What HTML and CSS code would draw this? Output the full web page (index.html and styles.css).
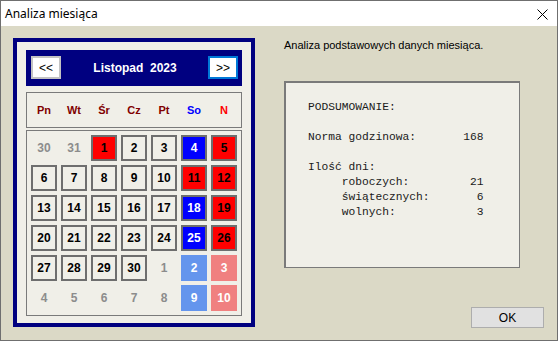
FILE: index.html
```html
<!DOCTYPE html>
<html lang="pl">
<head>
<meta charset="utf-8">
<title>Analiza miesiąca</title>
<link rel="stylesheet" href="styles.css">
</head>
<body>
<div class="window">
  <div class="titlebar">
    <span class="title">Analiza miesiąca</span>
    <svg class="close" width="11" height="11" viewBox="0 0 11 11"><path d="M0.5 0.5 L10.5 10.5 M10.5 0.5 L0.5 10.5" stroke="#000" stroke-width="1" fill="none"/></svg>
  </div>
  <div class="client">
    <div class="calframe">
      <div class="calhead">
        <button class="navbtn">&lt;&lt;</button>
        <span class="month">Listopad&nbsp; 2023</span>
        <button class="navbtn focused">&gt;&gt;</button>
      </div>
      <div class="daynames">
        <span>Pn</span><span>Wt</span><span>Śr</span><span>Cz</span><span>Pt</span><span class="sat">So</span><span class="sun">N</span>
      </div>
      <div class="days">
        <span class="d other">30</span><span class="d other">31</span><span class="d cell red">1</span><span class="d cell">2</span><span class="d cell">3</span><span class="d cell blue">4</span><span class="d cell red">5</span>
        <span class="d cell">6</span><span class="d cell">7</span><span class="d cell">8</span><span class="d cell">9</span><span class="d cell">10</span><span class="d cell red">11</span><span class="d cell red">12</span>
        <span class="d cell">13</span><span class="d cell">14</span><span class="d cell">15</span><span class="d cell">16</span><span class="d cell">17</span><span class="d cell blue">18</span><span class="d cell red">19</span>
        <span class="d cell">20</span><span class="d cell">21</span><span class="d cell">22</span><span class="d cell">23</span><span class="d cell">24</span><span class="d cell blue">25</span><span class="d cell red">26</span>
        <span class="d cell">27</span><span class="d cell">28</span><span class="d cell">29</span><span class="d cell">30</span><span class="d other">1</span><span class="d other lblue">2</span><span class="d other lred">3</span>
        <span class="d other">4</span><span class="d other">5</span><span class="d other">6</span><span class="d other">7</span><span class="d other">8</span><span class="d other lblue">9</span><span class="d other lred">10</span>
      </div>
    </div>
    <div class="side">
      <p class="desc">Analiza podstawowych danych miesiąca.</p>
      <pre class="summary">PODSUMOWANIE:

Norma godzinowa:       168

Ilość dni:
     roboczych:         21
     świątecznych:       6
     wolnych:            3</pre>
      <button class="ok">OK</button>
    </div>
  </div>
</div>
</body>
</html>
```
FILE: styles.css
```css
* { box-sizing: border-box; }
html, body { margin: 0; padding: 0; }
body { width: 558px; height: 341px; overflow: hidden; background: #dbd9c6; }

.window {
  width: 558px;
  height: 341px;
  border: 1px solid #6f6f6f;
  display: flex;
  flex-direction: column;
  background: #dbd9c6;
}

.titlebar {
  height: 25px;
  background: #ffffff;
  display: flex;
  align-items: center;
  justify-content: space-between;
  padding: 0 9px 0 4px;
  flex: none;
}
.title {
  font-family: "Noto Sans", "DejaVu Sans", sans-serif;
  font-size: 12px;
  color: #000;
  padding-bottom: 1px;
}
.close { display: block; margin-top: 1px; }

.client {
  flex: 1;
  display: flex;
  padding: 12px 12px 12px 12px;
  gap: 29px;
}

.calframe {
  width: 242px;
  height: 289px;
  border: 4px solid #000080;
  background: #f0efe8;
  padding: 8px 9px 7px 9px;
  display: flex;
  flex-direction: column;
  flex: none;
}

.calhead {
  height: 36px;
  background: #000080;
  display: flex;
  align-items: center;
  justify-content: space-between;
  padding: 0 4px 1px 5px;
}
.navbtn {
  width: 30px;
  height: 23px;
  margin: 0;
  padding: 0;
  background: #ffffff;
  border: 2px solid #c3c3c3;
  font-family: "Liberation Sans", Arial, sans-serif;
  font-size: 12px;
  color: #000;
  line-height: 18px;
}
.navbtn.focused { border-color: #0078d7; }
.month {
  font-family: "Liberation Sans", Arial, sans-serif;
  font-weight: bold;
  font-size: 12px;
  color: #ffffff;
  padding-left: 1px;
}

.daynames {
  margin-top: 6px;
  height: 36px;
  border: 1px solid #7a7a7a;
  display: grid;
  grid-template-columns: repeat(7, 26px);
  column-gap: 4px;
  padding: 0 4px;
  align-items: center;
  justify-items: center;
  font-family: "Liberation Sans", Arial, sans-serif;
  font-weight: bold;
  font-size: 11px;
  color: #800000;
}
.daynames .sat { color: #0000ff; }
.daynames .sun { color: #ff0000; }

.days {
  margin-top: 2px;
  border: 1px solid #7a7a7a;
  padding: 4px;
  display: grid;
  grid-template-columns: repeat(7, 26px);
  grid-auto-rows: 26px;
  gap: 4px;
}
.d {
  display: flex;
  align-items: center;
  justify-content: center;
  font-family: "Liberation Sans", Arial, sans-serif;
  font-weight: bold;
  font-size: 12px;
  color: #000;
}
.cell { border: 2px solid #6e6e6e; background: #f0efe8; }
.cell.red { background: #ff0000; color: #000; }
.cell.blue { background: #0000ff; color: #fff; }
.other { color: #8c8c8c; }
.other.lblue { background: #6495ed; color: #fff; }
.other.lred { background: #f08080; color: #fff; }

.side {
  flex: 1;
  display: flex;
  flex-direction: column;
  align-items: flex-start;
  padding-top: 0;
}
.desc {
  margin: 0;
  height: 14px;
  line-height: 14px;
  font-family: "Liberation Sans", Arial, sans-serif;
  font-size: 11px;
  color: #000;
}
.summary {
  margin: 29px 0 0 0;
  width: 236px;
  height: 187px;
  border: 2px solid #7a7a7a;
  border-right-width: 1px;
  border-bottom-width: 1px;
  background: #f0efe8;
  padding: 17px 0 0 22px;
  font-family: "Liberation Mono", "Courier New", monospace;
  font-size: 11.25px;
  line-height: 15px;
  color: #1a1a1a;
}
.ok {
  margin: auto 0 0 187px;
  width: 73px;
  height: 21px;
  padding: 0;
  background: #e1e1e1;
  border: 1px solid #adadad;
  font-family: "Liberation Sans", Arial, sans-serif;
  font-size: 12px;
  color: #000;
}
```
